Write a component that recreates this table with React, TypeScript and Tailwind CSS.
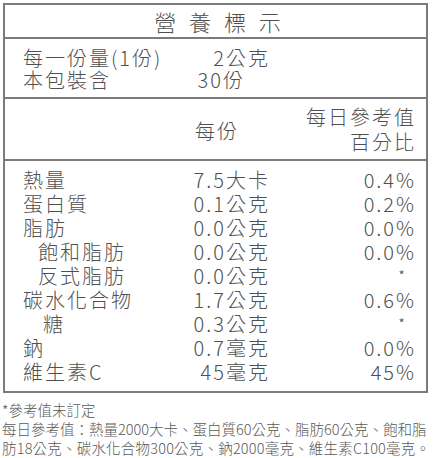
const rows = [
    { label: "熱量", amount: "7.5大卡", dv: "0.4%", indent: "" },
    { label: "蛋白質", amount: "0.1公克", dv: "0.2%", indent: "" },
    { label: "脂肪", amount: "0.0公克", dv: "0.0%", indent: "" },
    { label: "飽和脂肪", amount: "0.0公克", dv: "0.0%", indent: "pl-[15px]" },
    { label: "反式脂肪", amount: "0.0公克", dv: "*", indent: "pl-[15px]" },
    { label: "碳水化合物", amount: "1.7公克", dv: "0.6%", indent: "" },
    { label: "糖", amount: "0.3公克", dv: "*", indent: "pl-[20px]" },
    { label: "鈉", amount: "0.7毫克", dv: "0.0%", indent: "" },
    { label: "維生素C", amount: "45毫克", dv: "45%", indent: "" },
];

export default function App() {
    return (
        <div
            className="w-[433px] h-[458px] bg-white text-[#505050] overflow-hidden pt-[3px] pl-[3px]"
            style={{ fontFamily: '"Noto Sans CJK TC", "Noto Sans", sans-serif' }}
        >
            <div className="w-[425px] border-2 border-[#7b7b7b]">
                {/* title */}
                <div className="h-[34px] border-b-2 border-[#7b7b7b] flex items-center justify-center pl-[8px] text-[22px] tracking-[4px] leading-[28px] font-light">
                    營 養 標 示
                </div>

                {/* serving */}
                <div className="h-[60px] border-b-2 border-[#7b7b7b] pt-[8px] pl-[18px] text-[20px] tracking-[2px] leading-[22px] font-light">
                    <div className="grid grid-cols-[127px_120px]">
                        <span className="whitespace-nowrap">每一份量(1份)</span>
                        <span className="text-right whitespace-nowrap">2公克</span>
                    </div>
                    <div className="grid grid-cols-[127px_120px]">
                        <span className="whitespace-nowrap">本包裝含</span>
                        <span className="text-right whitespace-nowrap pr-[25px]">30份</span>
                    </div>
                </div>

                {/* header */}
                <div className="h-[62px] border-b-2 border-[#7b7b7b] pt-[5px] pl-[18px] pr-[10px] grid grid-cols-[127px_120px_1fr] text-[20px] tracking-[2px] leading-[25px] font-light">
                    <span />
                    <span className="text-center pt-[14px] pl-[14px]">每份</span>
                    <div className="text-right">
                        <div>每日參考值</div>
                        <div>百分比</div>
                    </div>
                </div>

                {/* nutrients */}
                <div className="pt-[7px] pb-[7px] pl-[18px] pr-[10px] text-[20px] tracking-[2px] leading-[24px] font-light">
                    {rows.map((r) => (
                        <div key={r.label} className="grid grid-cols-[127px_120px_1fr]">
                            <span className={`whitespace-nowrap ${r.indent}`}>{r.label}</span>
                            <span className="text-right whitespace-nowrap">{r.amount}</span>
                            <span className={r.dv === "*" ? "text-right pr-[9px] text-[15px]" : "text-right"}>
                                {r.dv}
                            </span>
                        </div>
                    ))}
                </div>
            </div>

            {/* footnote */}
            <div className="mt-[7px] -ml-[1px] text-[14.5px] leading-[19px] text-[#5a5a5a] whitespace-nowrap font-light">
                <div>*參考值未訂定</div>
                <div>每日參考值：熱量2000大卡、蛋白質60公克、脂肪60公克、飽和脂</div>
                <div className="tracking-[0.2px]">肪18公克、碳水化合物300公克、鈉2000毫克、維生素C100毫克。</div>
            </div>
        </div>
    );
}
